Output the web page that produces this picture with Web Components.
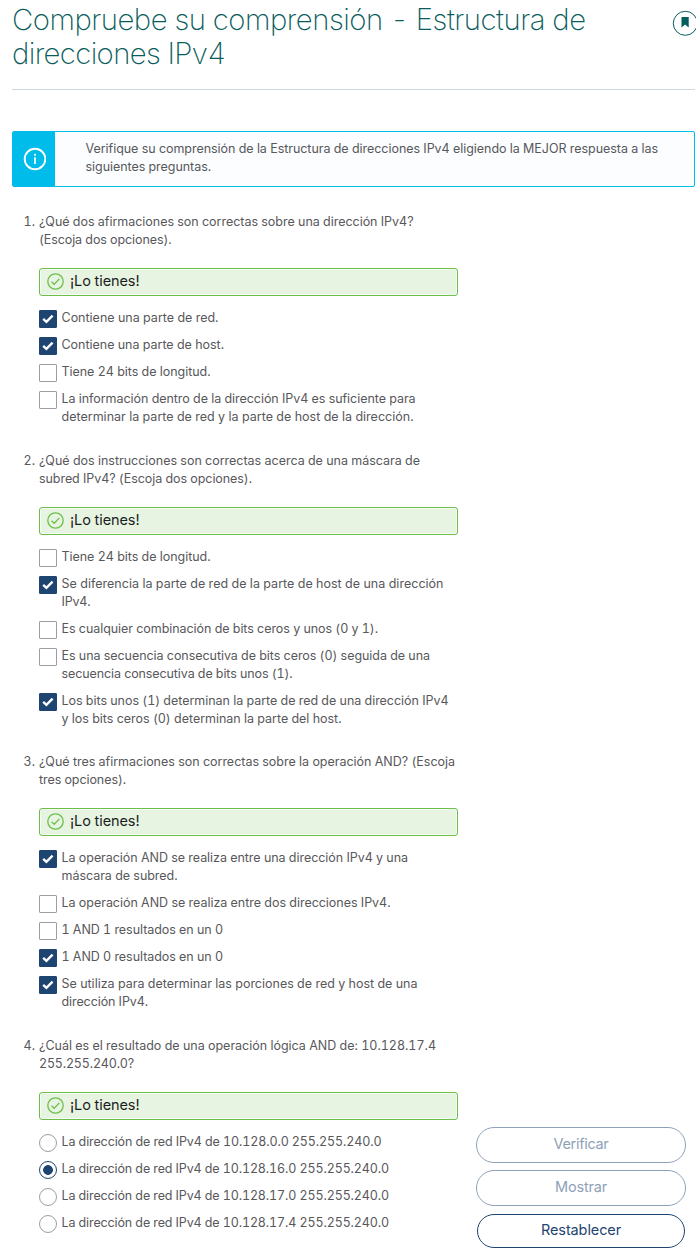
<!DOCTYPE html>
<html lang="es">
<head>
<meta charset="utf-8">
<title>Compruebe su comprensión</title>
<style>
html,body{margin:0;background:#fff}
body{height:1258px;overflow:hidden;font:12.5px/18px Inter,"Liberation Sans",sans-serif;font-variant-numeric:tabular-nums;color:#58585b}
</style>
</head>
<body>
<quiz-page>
  <page-title slot="title"><text-line w="572.500">Compruebe su comprensión - Estructura de</text-line><text-line w="212.500">direcciones IPv4</text-line></page-title>
  <info-note slot="note"><text-line w="571.500">Verifique su comprensión de la Estructura de direcciones IPv4 eligiendo la MEJOR respuesta a las</text-line><text-line w="124.500">siguientes preguntas.</text-line></info-note>
  <quiz-question n="1.">
    <text-line slot="q" w="373.500">¿Qué dos afirmaciones son correctas sobre una dirección IPv4?</text-line>
    <text-line slot="q" w="131.500">(Escoja dos opciones).</text-line>
    <quiz-option on><text-line w="156">Contiene una parte de red.</text-line></quiz-option>
    <quiz-option on><text-line w="161.500">Contiene una parte de host.</text-line></quiz-option>
    <quiz-option><text-line w="148">Tiene 24 bits de longitud.</text-line></quiz-option>
    <quiz-option><text-line w="353">La información dentro de la dirección IPv4 es suficiente para</text-line><text-line w="351">determinar la parte de red y la parte de host de la dirección.</text-line></quiz-option>
  </quiz-question>
  <quiz-question n="2." style="margin-top:26px">
    <text-line slot="q" w="380">¿Qué dos instrucciones son correctas acerca de una máscara de</text-line>
    <text-line slot="q" w="212">subred IPv4? (Escoja dos opciones).</text-line>
    <quiz-option><text-line w="148">Tiene 24 bits de longitud.</text-line></quiz-option>
    <quiz-option on><text-line w="381">Se diferencia la parte de red de la parte de host de una dirección</text-line><text-line w="28">IPv4.</text-line></quiz-option>
    <quiz-option><text-line w="315.500">Es cualquier combinación de bits ceros y unos (0 y 1).</text-line></quiz-option>
    <quiz-option><text-line w="367.500">Es una secuencia consecutiva de bits ceros (0) seguida de una</text-line><text-line w="230">secuencia consecutiva de bits unos (1).</text-line></quiz-option>
    <quiz-option on><text-line w="386">Los bits unos (1) determinan la parte de red de una dirección IPv4</text-line><text-line w="279">y los bits ceros (0) determinan la parte del host.</text-line></quiz-option>
  </quiz-question>
  <quiz-question n="3." style="margin-top:25px">
    <text-line slot="q" w="415">¿Qué tres afirmaciones son correctas sobre la operación AND? (Escoja</text-line>
    <text-line slot="q" w="86">tres opciones).</text-line>
    <quiz-option on><text-line w="345.500">La operación AND se realiza entre una dirección IPv4 y una</text-line><text-line w="115">máscara de subred.</text-line></quiz-option>
    <quiz-option><text-line w="328">La operación AND se realiza entre dos direcciones IPv4.</text-line></quiz-option>
    <quiz-option><text-line w="160.500">1 AND 1 resultados en un 0</text-line></quiz-option>
    <quiz-option on><text-line w="160.500">1 AND 0 resultados en un 0</text-line></quiz-option>
    <quiz-option on><text-line w="355">Se utiliza para determinar las porciones de red y host de una</text-line><text-line w="85.500">dirección IPv4.</text-line></quiz-option>
  </quiz-question>
  <quiz-question n="4." style="margin-top:26px">
    <text-line slot="q" w="396">¿Cuál es el resultado de una operación lógica AND de: 10.128.17.4</text-line>
    <text-line slot="q" w="94">255.255.240.0?</text-line>
    <quiz-option radio><text-line w="319">La dirección de red IPv4 de 10.128.0.0 255.255.240.0</text-line></quiz-option>
    <quiz-option radio on><text-line w="326.500">La dirección de red IPv4 de 10.128.16.0 255.255.240.0</text-line></quiz-option>
    <quiz-option radio><text-line w="326.500">La dirección de red IPv4 de 10.128.17.0 255.255.240.0</text-line></quiz-option>
    <quiz-option radio><text-line w="326.500">La dirección de red IPv4 de 10.128.17.4 255.255.240.0</text-line></quiz-option>
  </quiz-question>
  <pill-button slot="actions" disabled><text-line w="54">Verificar</text-line></pill-button>
  <pill-button slot="actions" disabled><text-line w="51">Mostrar</text-line></pill-button>
  <pill-button slot="actions"><text-line w="79">Restablecer</text-line></pill-button>
</quiz-page>
<script>
const define = (name, html, setup) => customElements.define(name, class extends HTMLElement {
  constructor() {
    super();
    this.attachShadow({mode: 'open'}).innerHTML = html;
  }
  connectedCallback() { if (setup) setup(this, this.shadowRoot); }
});

define('quiz-page', `<style>
:host{display:block;padding:3px 1px 0 12px}
.body{display:grid;grid-template-columns:446px 210px;column-gap:18px;margin-top:26px}
.actions{align-self:end;display:flex;flex-direction:column;gap:7px;margin-bottom:-16px}
</style>
<slot name="title"></slot><slot name="note"></slot>
<div class="body"><div><slot></slot></div><div class="actions"><slot name="actions"></slot></div></div>`);

define('page-title', `<style>
:host{display:flex;justify-content:space-between;height:86px;border-bottom:1px solid #c9d8da;color:#0a5c5c;font-size:29.3px;line-height:34px;font-weight:200}
.t{flex:none}
svg{flex:none;margin:7px -3px 0 0;width:26px;height:26px}
</style><div class="t"><slot></slot></div>
<svg viewBox="0 0 26 26"><circle cx="13.300" cy="13.300" r="12" fill="#fff" stroke="#0a5c5c" stroke-width="1"/><path d="M9.500 7h7.200v10.500L13.100 14.500l-3.600 3z" fill="#005e5c"/></svg>`);

define('info-note', `<style>
:host{display:flex;box-sizing:border-box;height:56px;margin-top:41px;border:1px solid #00bceb;border-radius:2px;background:#fbfdff}
.icon{width:42px;display:flex;align-items:center;justify-content:center;background:#00bceb}
.text{padding:8px 0 0 30.500px}
</style><div class="icon"><svg width="24" height="24" viewBox="0 0 24 24" fill="none" stroke="#fff"><circle cx="13" cy="12" r="10.300" stroke-width="1.900"/><path d="M13 10.200v6.800M13 6.800v2" stroke-width="1.700"/></svg></div><div class="text"><slot></slot></div>`);

define('quiz-question', `<style>
:host{display:block}
.q{display:grid;grid-template-columns:27px 1fr}
.n{padding-right:4px;text-align:right}
.c{margin:19px 0 13px 27px}
.opts{display:flex;flex-direction:column;gap:9px;margin-left:27px}
</style><div class="q"><span class="n"></span><div><slot name="q"></slot></div></div>
<got-it class="c"></got-it><div class="opts"><slot></slot></div>`,
  (el, root) => { root.querySelector('.n').textContent = el.getAttribute('n'); });

define('got-it', `<style>
:host{display:flex;box-sizing:border-box;width:419px;height:28px;border:1px solid #6cc04a;border-radius:3px;background:#e8f4e2;box-shadow:inset 0 0 0 1px #f6fbf4;color:#1b1c1d;font-size:14.5px;line-height:24px}
svg{flex:none;margin:3.500px 6px 0 7px}
</style><svg width="17" height="17" viewBox="0 0 17 17" fill="none" stroke="#6cc04a" stroke-width="1.300"><circle cx="8.500" cy="8.500" r="7.700"/><path d="M4.500 8.800l2.700 2.500 5.200-5.400"/></svg><text-line w="68.500">¡Lo tienes!</text-line>`);

define('quiz-option', `<style>
:host{display:flex;gap:4.500px}
.m{box-sizing:border-box;flex:none;width:18px;height:18px;margin:1px 0 -1px;border:1px solid #9e9ea2;border-radius:1px;background:#fff}
svg{display:none;width:18px;height:18px;margin:-1px}
:host([on]) .m{background:#1e4471;border-color:#1e4471}
:host([on]:not([radio])) svg{display:block}
:host([radio]) .m{border-radius:50%}
:host([radio][on]) .m{background:radial-gradient(circle,#1e4471 4.500px,#fff 5.200px)}
</style><span class="m"><svg viewBox="0 0 18 18"><path d="M4.200 8.800l3.200 3 6.200-6.200" fill="none" stroke="#fff" stroke-width="2.400"/></svg></span><div><slot></slot></div>`);

define('pill-button', `<style>
:host{display:flex;justify-content:center;box-sizing:border-box;height:36px;border:1px solid #8fa1b8;border-radius:18px;color:#8fa1b8;font-size:14.500px;line-height:32px}
:host(:not([disabled])){height:34px;margin:1px 1px 0;border-color:#1e4471;color:#1e4471;line-height:30px}
</style><slot></slot>`);

/* One line of copy whose tracking is tuned so that it is w pixels wide. */
define('text-line', `<style>
:host{display:block;white-space:pre}
span{display:inline-block}
</style><span><slot></slot></span>`, (el, root) => {
  const span = root.querySelector('span');
  const count = el.textContent.length;
  if (!count) return;
  span.style.letterSpacing = '0';
  const delta = (+el.getAttribute('w') + 1 - span.getBoundingClientRect().width) / count;
  span.style.letterSpacing = delta.toFixed(3) + 'px';
});
</script>
</body>
</html>
